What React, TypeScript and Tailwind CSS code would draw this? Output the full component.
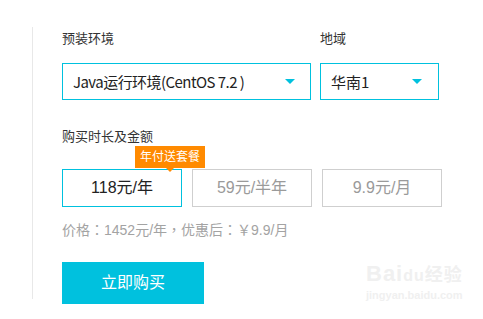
import React from 'react';

const font = { fontFamily: '"Liberation Sans", "Noto Sans CJK SC", sans-serif' };
const cjkFirst = { fontFamily: '"Noto Sans CJK SC", "Liberation Sans", sans-serif' };
const punct = { fontFamily: '"Noto Sans CJK TC", sans-serif' };

const Caret = () => (
  <svg width="10" height="5" viewBox="0 0 10 5" className="shrink-0">
    <path d="M0 0 H10 L5 5 Z" fill="#00c1de" />
  </svg>
);

const P: React.FC<{ c: string }> = ({ c }) => (
  <span className="inline-block w-[14px] text-center" style={punct}>{c}</span>
);

const App: React.FC = () => {
  return (
    <div className="relative w-[483px] h-[319px] bg-white overflow-hidden text-[#333]" style={font}>
      <div className="flex pl-[32px] pt-[27px]">
        <div className="w-px h-[272px] bg-[#e8e8e8]" />
        <div className="ml-[29px] pt-[3px]">
          <div className="flex gap-[9px]">
            <div className="w-[249px]">
              <div className="text-[13px] leading-[18px] text-[#333]">预装环境</div>
              <div className="mt-[15px] h-[37px] border border-[#00c1de] flex items-center justify-between pl-[10px] pr-[15px]">
                <span className="text-[15px] leading-[20px] tracking-[-0.55px] text-[#222]" style={cjkFirst}>Java运行环境(CentOS 7.2 )</span>
                <Caret />
              </div>
            </div>
            <div className="w-[119px]">
              <div className="text-[13px] leading-[18px] text-[#333]">地域</div>
              <div className="mt-[15px] h-[37px] border border-[#00c1de] flex items-center justify-between pl-[10px] pr-[16px]">
                <span className="text-[15px] leading-[20px] text-[#222]" style={cjkFirst}>华南1</span>
                <Caret />
              </div>
            </div>
          </div>

          <div className="mt-[28px] text-[13px] leading-[18px] text-[#333]">购买时长及金额</div>

          <div className="mt-[23px] flex gap-[10px]">
            <div className="relative w-[120px] h-[38px] border border-[#00c1de] flex items-center justify-center text-[16px] text-[#222]">
              118元/年
              <div className="absolute left-[72px] top-[-24px] w-[70px] h-[22px] bg-[#ff8a00] text-white text-[12px] flex items-center justify-center">
                年付送套餐
                <span className="absolute bottom-[-4px] left-[31px] w-0 h-0 border-l-[4px] border-r-[4px] border-t-[4px] border-l-transparent border-r-transparent border-t-[#ff8a00]" />
              </div>
            </div>
            <div className="w-[120px] h-[38px] border border-[#cfcfcf] flex items-center justify-center text-[16px] text-[#9a9a9a]">
              59元/半年
            </div>
            <div className="w-[120px] h-[38px] border border-[#cfcfcf] flex items-center justify-center text-[16px] text-[#9a9a9a]">
              9.9元/月
            </div>
          </div>

          <div className="mt-[13px] text-[14px] leading-[19px] text-[#a3a3a3]">
            价格<P c="：" />1452元/年<P c="，" />优惠后<P c="：" />￥9.9/月
          </div>

          <button className="mt-[22px] w-[142px] h-[42px] bg-[#00c1de] text-white text-[16px] flex items-center justify-center">
            立即购买
          </button>
        </div>
      </div>

      <div className="absolute left-[366px] top-[262px] flex flex-col items-start text-[#f0f0f0] select-none">
        <div className="text-[22px] leading-[24px] font-bold tracking-[1px]">Bai<span className="text-[16px]">du</span><span className="text-[18px]">经验</span></div>
        <div className="text-[11px] leading-[14px] font-bold">jingyan.baidu.com</div>
      </div>
    </div>
  );
};

export default App;
